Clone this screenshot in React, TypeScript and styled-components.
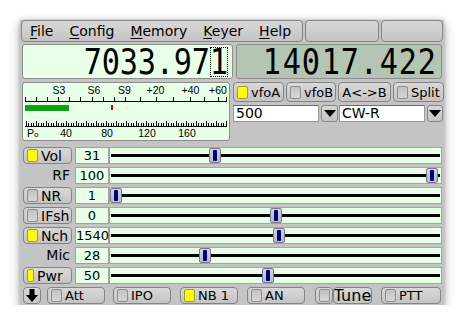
import React from 'react';
import styled, { createGlobalStyle } from 'styled-components';

const GlobalStyle = createGlobalStyle`
  html, body {
    margin: 0;
    padding: 0;
    background: #ffffff;
  }
  body {
    font-family: "DejaVu Sans", "Noto Sans", sans-serif;
    font-size: 13px;
    color: #000000;
  }
`;

const LIGHT = '#e8ffe8';
const FACE = 'linear-gradient(#d8d8d8, #c4c4c4)';
const EDGE = '#848484';

const Page = styled.div`
  padding: 20px 0 0 20px;
`;

const Window = styled.div`
  width: 424px;
  height: 285px;
  box-sizing: border-box;
  background: #c4c4c4;
  box-shadow: 0 3px 10px rgba(0, 0, 0, 0.35), 0 0 3px rgba(0, 0, 0, 0.2);
  display: flex;
  flex-direction: column;
  padding: 0 1px;
`;

/* ---------- menu bar ---------- */

const TopRow = styled.div`
  display: flex;
  gap: 2px;
  height: 22px;
`;

const MenuBar = styled.div`
  width: 283px;
  box-sizing: border-box;
  border: 1px solid ${EDGE};
  border-radius: 4px;
  background: ${FACE};
  display: flex;
  align-items: center;
`;

const MenuItem = styled.span`
  padding: 0 8px;
  font-size: 14px;
  u {
    text-decoration-thickness: 1px;
    text-underline-offset: 2px;
  }
`;

const BarButton = styled.div<{ $w: number }>`
  width: ${p => p.$w}px;
  box-sizing: border-box;
  border: 1px solid ${EDGE};
  border-radius: 4px;
  background: ${FACE};
`;

/* ---------- frequency displays ---------- */

const FreqRow = styled.div`
  display: flex;
  gap: 3px;
  height: 35px;
  margin: 2px 1px 0 1px;
`;

const FreqDisplay = styled.div<{ $b?: boolean; $w?: number }>`
  ${p => (p.$w ? `width: ${p.$w}px;` : 'flex: 1;')}
  box-sizing: border-box;
  border: 1px solid #8c8c8c;
  border-radius: 3px;
  background: ${p => (p.$b ? '#b5c5b3' : LIGHT)};
  display: flex;
  justify-content: flex-end;
  align-items: center;
  padding-right: 4px;
`;

const DigitCell = styled.div<{ $w: number; $focus?: boolean }>`
  width: ${p => p.$w}px;
  height: 30px;
  box-sizing: border-box;
  display: flex;
  align-items: center;
  justify-content: center;
  border: 1px dotted ${p => (p.$focus ? '#000' : 'transparent')};
`;

const Glyph = styled.span`
  display: inline-block;
  font-family: "DejaVu Sans Mono", monospace;
  font-size: 36px;
  line-height: 30px;
  transform: scaleX(0.84);
`;

/* ---------- meter + vfo panel ---------- */

const MeterRow = styled.div`
  display: flex;
  margin: 3px 1px 0 1px;
  height: 59px;
`;

const Meter = styled.div`
  width: 208px;
  box-sizing: border-box;
  border: 1px solid #8c8c8c;
  border-radius: 3px;
  background: ${LIGHT};
  svg {
    display: block;
  }
`;

const VfoPanel = styled.div`
  flex: 1;
  margin-left: 3px;
  display: flex;
  flex-direction: column;
`;

const VfoButtons = styled.div`
  display: flex;
  gap: 2px;
  height: 20px;
`;

const Btn = styled.div<{ $w: number; $size?: number }>`
  width: ${p => p.$w}px;
  flex: none;
  box-sizing: border-box;
  border: 1px solid ${EDGE};
  border-radius: 4px;
  background: ${FACE};
  display: flex;
  align-items: center;
  gap: 3px;
  padding-left: 3px;
  font-size: ${p => p.$size || 13}px;
  white-space: nowrap;
  overflow: hidden;
`;

const CenterBtn = styled(Btn)`
  justify-content: center;
  padding-left: 0;
`;

const Indicator = styled.span<{ $on?: boolean; $w?: number }>`
  width: ${p => p.$w || 11}px;
  height: 13px;
  flex: none;
  box-sizing: border-box;
  border: 1px solid ${p => (p.$on ? '#9a9a40' : '#8e8e8e')};
  border-radius: 2px;
  background: ${p => (p.$on ? '#ffff00' : 'linear-gradient(#c2c2c2, #d6d6d6)')};
`;

const InputRow = styled.div`
  display: flex;
  height: 17px;
  margin-top: 3px;
`;

const TextInput = styled.div<{ $w: number }>`
  width: ${p => p.$w}px;
  box-sizing: border-box;
  background: #ffffff;
  border: 1px solid #9a9a9a;
  border-top-color: #6e6e6e;
  font-size: 14px;
  line-height: 15px;
  padding-left: 2px;
`;

const DropButton = styled.div<{ $w: number; $ml: number }>`
  width: ${p => p.$w}px;
  margin: 0 ${p => p.$ml}px 0 2px;
  box-sizing: border-box;
  border: 1px solid ${EDGE};
  border-radius: 3px;
  background: ${FACE};
  display: flex;
  align-items: center;
  justify-content: center;
  &::after {
    content: '';
    border-left: 6px solid transparent;
    border-right: 6px solid transparent;
    border-top: 7px solid #000;
  }
`;

/* ---------- slider rows ---------- */

const Sliders = styled.div`
  margin-top: 6px;
  display: flex;
  flex-direction: column;
  gap: 3px;
`;

const SliderRow = styled.div`
  display: flex;
  height: 17px;
  padding-left: 2px;
  margin-right: 1px;
`;

const LabelBtn = styled(Btn)`
  width: 49px;
`;

const PlainLabel = styled.div`
  width: 49px;
  box-sizing: border-box;
  text-align: right;
  padding-right: 2px;
  font-size: 14px;
  line-height: 17px;
`;

const ValueBox = styled.div`
  width: 34px;
  margin-left: 3px;
  box-sizing: border-box;
  background: ${LIGHT};
  border: 1px solid #a0a0a0;
  text-align: center;
  font-size: 13px;
  line-height: 15px;
`;

const Track = styled.div`
  flex: 1;
  position: relative;
  box-sizing: border-box;
  background: ${LIGHT};
  border: 1px solid #a4a4a4;
  &::before {
    content: '';
    position: absolute;
    left: 1px;
    right: 1px;
    top: 6px;
    height: 3px;
    background: #000;
  }
`;

const Thumb = styled.div`
  position: absolute;
  top: 0;
  width: 12px;
  height: 15px;
  box-sizing: border-box;
  border: 1px solid #7a7a8a;
  border-radius: 2px;
  background: linear-gradient(#d4d4de, #b8b8c8);
  &::after {
    content: '';
    position: absolute;
    left: 3px;
    top: 1px;
    width: 4px;
    height: 11px;
    border-radius: 1px;
    background: #00007a;
  }
`;

/* ---------- bottom row ---------- */

const BottomRow = styled.div`
  display: flex;
  height: 17px;
  margin-top: 3px;
  padding-left: 2px;
`;

const Spaced = styled.div<{ $ml: number }>`
  margin-left: ${p => p.$ml}px;
  display: flex;
`;

type SliderProps = {
  label: string;
  value: string;
  frac: number;
  kind: 'on' | 'off' | 'plain';
  indW?: number;
};

function SliderLine({ label, value, frac, kind, indW }: SliderProps) {
  return (
    <SliderRow>
      {kind === 'plain' ? (
        <PlainLabel>{label}</PlainLabel>
      ) : (
        <LabelBtn $w={49} $size={14}>
          <Indicator $on={kind === 'on'} $w={indW} />
          {label}
        </LabelBtn>
      )}
      <ValueBox>{value}</ValueBox>
      <Track>
        <Thumb style={{ left: `calc(${frac} * (100% - 12px))` }} />
      </Track>
    </SliderRow>
  );
}

function Frequency({ text, pitch, focusLast }: { text: string; pitch: number; focusLast?: boolean }) {
  const chars = text.split('');
  return (
    <>
      {chars.map((c, i) => (
        <DigitCell key={i} $w={pitch} $focus={focusLast && i === chars.length - 1}>
          <Glyph>{c}</Glyph>
        </DigitCell>
      ))}
    </>
  );
}

function SMeter() {
  const sTicks = [2, 13, 24, 35, 46, 57, 69, 80, 91, 102, 117, 133, 150, 167, 181, 195, 203];
  const ruler: React.ReactNode[] = [];
  for (let w = 0; w <= 200; w += 2.5) {
    const x = 3 + w;
    const major = w % 10 === 0;
    ruler.push(<line key={w} x1={x} x2={x} y1={43} y2={major ? 38 : 40} stroke="#000" strokeWidth={1} />);
  }
  const label = { fontFamily: '"Liberation Sans", Arial, sans-serif', fontSize: 10.5, textAnchor: 'middle' as const };
  return (
    <svg width={206} height={57} viewBox="0 0 206 57" shapeRendering="crispEdges">
      {[['S3', 36], ['S6', 71], ['S9', 101.5], ['+20', 132.5], ['+40', 167.5], ['+60', 195]].map(([t, x]) => (
        <text key={t as string} x={x as number} y={10.5} {...label}>{t}</text>
      ))}
      <line x1={2} x2={204} y1={18.5} y2={18.5} stroke="#000" strokeWidth={1} />
      {sTicks.map(x => (
        <line key={x} x1={x + 0.5} x2={x + 0.5} y1={18} y2={14} stroke="#000" strokeWidth={1} />
      ))}
      <rect x={2} y={22} width={44} height={6} fill="#14a014" />
      <rect x={88} y={22} width={2} height={5} fill="#e00000" />
      <line x1={2} x2={204} y1={43.5} y2={43.5} stroke="#000" strokeWidth={1} />
      {ruler}
      <text x={4} y={54} fontFamily='"Liberation Sans", Arial, sans-serif' fontSize={10.5}>
        P<tspan fontSize={8}>o</tspan>
      </text>
      {[['40', 43], ['80', 84], ['120', 124], ['160', 164]].map(([t, x]) => (
        <text key={t} x={x} y={54} {...label}>{t}</text>
      ))}
    </svg>
  );
}

function DownArrow() {
  return (
    <svg width={12} height={13} viewBox="0 0 12 13">
      <path d="M3.5 0 H8.5 V6 H12 L6 13 L0 6 H3.5 Z" fill="#000" />
    </svg>
  );
}

export default function App() {
  return (
    <>
      <GlobalStyle />
      <Page>
        <Window>
          <TopRow>
            <MenuBar>
              <MenuItem><u>F</u>ile</MenuItem>
              <MenuItem><u>C</u>onfig</MenuItem>
              <MenuItem><u>M</u>emory</MenuItem>
              <MenuItem><u>K</u>eyer</MenuItem>
              <MenuItem><u>H</u>elp</MenuItem>
            </MenuBar>
            <BarButton $w={75} />
            <BarButton $w={62} />
          </TopRow>

          <FreqRow>
            <FreqDisplay $w={211}>
              <Frequency text="7033.971" pitch={18} focusLast />
            </FreqDisplay>
            <FreqDisplay $b>
              <Frequency text="14017.422" pitch={19.4} />
            </FreqDisplay>
          </FreqRow>

          <MeterRow>
            <Meter>
              <SMeter />
            </Meter>
            <VfoPanel>
              <VfoButtons>
                <Btn $w={51}><Indicator $on />vfoA</Btn>
                <Btn $w={50}><Indicator />vfoB</Btn>
                <CenterBtn $w={53}>A&lt;-&gt;B</CenterBtn>
                <Btn $w={51}><Indicator />Split</Btn>
              </VfoButtons>
              <InputRow>
                <TextInput $w={86}>500</TextInput>
                <DropButton $w={17} $ml={1} />
                <TextInput $w={86}>CW-R</TextInput>
                <DropButton $w={16} $ml={0} />
              </InputRow>
            </VfoPanel>
          </MeterRow>

          <Sliders>
            <SliderLine label="Vol" value="31" frac={0.31} kind="on" />
            <SliderLine label="RF" value="100" frac={0.99} kind="plain" />
            <SliderLine label="NR" value="1" frac={0.0} kind="off" />
            <SliderLine label="IFsh" value="0" frac={0.5} kind="off" />
            <SliderLine label="Nch" value="1540" frac={0.51} kind="on" />
            <SliderLine label="Mic" value="28" frac={0.28} kind="plain" />
            <SliderLine label="Pwr" value="50" frac={0.475} kind="on" indW={7} />
          </Sliders>

          <BottomRow>
            <CenterBtn $w={18}><DownArrow /></CenterBtn>
            <Spaced $ml={6}><Btn $w={58}><Indicator />Att</Btn></Spaced>
            <Spaced $ml={8}><Btn $w={58}><Indicator />IPO</Btn></Spaced>
            <Spaced $ml={9}><Btn $w={58}><Indicator $on />NB 1</Btn></Spaced>
            <Spaced $ml={9}><Btn $w={58}><Indicator />AN</Btn></Spaced>
            <Spaced $ml={10}>
              <CenterBtn $w={18}><Indicator /></CenterBtn>
              <CenterBtn $w={39} $size={16}>Tune</CenterBtn>
            </Spaced>
            <Spaced $ml={9}><Btn $w={60}><Indicator />PTT</Btn></Spaced>
          </BottomRow>
        </Window>
      </Page>
    </>
  );
}
